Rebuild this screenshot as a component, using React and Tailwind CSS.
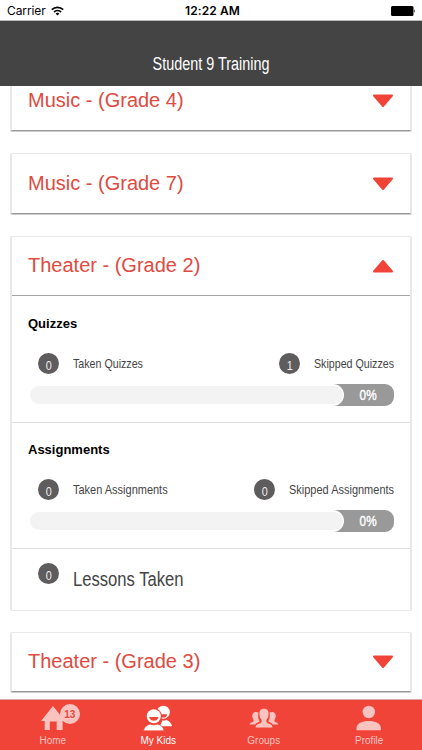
import React, { useState } from "react";

const courses = [
  { id: 1, title: "Music - (Grade 4)", style: "h-[60px] -mt-[15px]" },
  { id: 2, title: "Music - (Grade 7)", style: "h-[61px] mt-[22px]" },
  { id: 3, title: "Theater - (Grade 2)", style: "h-[60px]" },
  { id: 4, title: "Theater - (Grade 3)", style: "h-[60px] mt-[21px]" }
];

const Arrow = ({ up }) => (
  <svg viewBox="0 0 22 14" className={up ? "w-[22px] h-[14px] rotate-180" : "w-[22px] h-[14px]"}>
    <path d="M2 1.5H20L11 12Z" fill="#f04438" stroke="#f04438" strokeWidth="2" strokeLinejoin="round" />
  </svg>
);

const CourseHeader = ({ course, open, onToggle }) => (
  <button
    type="button"
    onClick={onToggle}
    className="w-full h-full flex items-center justify-between pl-4 pr-[16px] text-[#e04a3f]"
  >
    <span className="text-[20px] leading-6 pb-[2px] whitespace-nowrap">{course.title}</span>
    <Arrow up={open} />
  </button>
);

const Count = ({ value }) => (
  <span className="w-[21px] h-[21px] shrink-0 rounded-full bg-[#5e5c5d] text-[#eee] text-[13.5px] leading-[26px] text-center">
    <span className="inline-block scale-x-[.8]">{value}</span>
  </span>
);

const Section = ({ title, taken, skipped, percent, style, takenStyle, skippedStyle }) => (
  <div className={`${style} border-b border-[#dedede] pl-4 pr-[16px]`}>
    <h3 className="text-[13px] leading-4 font-bold text-black">{title}</h3>
    <div className="flex items-center justify-between mt-[21px] h-[21px] pl-[10px] text-[13px] leading-5 text-[#444]">
      <div className="flex items-center gap-[14px]">
        <Count value={taken} />
        <span className={`whitespace-nowrap origin-left ${takenStyle}`}>Taken {title}</span>
      </div>
      <div className="flex items-center gap-[14px]">
        <Count value={skipped} />
        <span className={`whitespace-nowrap origin-left ${skippedStyle}`}>Skipped {title}</span>
      </div>
    </div>
    <div className="mt-[10px] ml-[2px] h-[22px] flex items-center rounded-r-[9px] bg-linear-to-r from-white from-[304px] to-[#999] to-[304px]">
      <div className="w-[314px] h-[22px] bg-white rounded-r-[11px] flex items-center">
        <div className="w-[313px] h-[18px] rounded-[9px] bg-[#f3f3f3]" />
      </div>
      <span className="flex-1 pr-[2px] text-center text-[14px] leading-5 text-white [-webkit-text-stroke:0.4px_white]">
        <span className="inline-block scale-x-[.84]">{percent}%</span>
      </span>
    </div>
  </div>
);

const tabs = [
  {
    name: "Home",
    badge: 13,
    icon: (
      <svg viewBox="0 0 30 28" className="w-[30px] h-[28px]" fill="currentColor">
        <path d="M3 17 15 2 27 17H24.6V26H18.7V17.5H11.8V26H6.7V17Z" />
      </svg>
    )
  },
  {
    name: "My Kids",
    icon: (
      <svg viewBox="0 0 30 28" className="w-[30px] h-[28px]" fill="currentColor">
        <circle cx="20.3" cy="8.2" r="6.5" />
        <path d="M16.5 10.2H24.3C24 12.2 22.5 13.6 20.4 13.6H16.5Z" fill="#f04438" />
        <path d="M17 22.3 19.5 16.3C21 17 22.4 16.4 23.4 16 26.5 17 28.6 19.3 29 22.3Z" />
        <circle cx="10.8" cy="12.2" r="8.2" fill="#f04438" />
        <circle cx="10.8" cy="12.2" r="7" />
        <path d="M6.1 13H15.5C15 15.3 13.2 16.8 10.8 16.8S6.6 15.3 6.1 13Z" fill="#f04438" />
        <path
          d="M.6 26.8C1 23.2 4 20.8 7.3 20.2Q10.8 21.8 14.3 20.2C17.6 20.8 20.6 23.2 21 26.8Z"
          stroke="#f04438"
          strokeWidth=".6"
        />
      </svg>
    )
  },
  {
    name: "Groups",
    icon: (
      <svg viewBox="0 0 30 28" className="w-[30px] h-[28px]" fill="currentColor">
        <path d="M9.5 8.6C5.8 6.8 3 8.8 3.3 12.2 3.5 15 4.8 15.6 4.7 17.2 3.5 18.4 1.2 18 .7 20.4H6.3C7 18.9 9.5 18.4 10.7 17.6 9.3 15 8.8 12.6 9.5 8.6Z" />
        <path d="M20.5 8.6C24.2 6.8 27 8.8 26.7 12.2 26.5 15 25.2 15.6 25.3 17.2 26.5 18.4 28.8 18 29.3 20.4H23.7C23 18.9 20.5 18.4 19.3 17.6 20.7 15 21.2 12.6 20.5 8.6Z" />
        <path d="M15 4.7C11.6 4.7 10.2 6.9 10.5 10 10.4 13 11.3 14.2 12.4 15.5 13.2 19.2 11.5 19.2 9.3 20.1 7.5 20.7 6.7 21.8 6.5 23.6H23.5C23.3 21.8 22.5 20.7 20.7 20.1 18.5 19.2 16.8 19.2 17.6 15.5 18.7 14.2 19.6 13 19.5 10 19.8 6.9 18.4 4.7 15 4.7Z" />
      </svg>
    )
  },
  {
    name: "Profile",
    icon: (
      <svg viewBox="0 0 30 28" className="w-[30px] h-[28px]" fill="currentColor">
        <circle cx="14.8" cy="8" r="6.2" />
        <path d="M2.5 26.3V24C2.5 19.6 8.3 17 14.7 17S26.9 19.6 26.9 24V26.3Z" />
      </svg>
    )
  }
];

const App = () => {
  const [openId, setOpenId] = useState(3);
  const [activeTab, setActiveTab] = useState("My Kids");

  const toggle = (id) => setOpenId(openId === id ? null : id);

  return (
    <div className="w-[422px] h-[750px] flex flex-col overflow-hidden bg-white font-['Liberation_Sans',Arial,sans-serif]">
      {/* status bar */}
      <div className="h-[21px] shrink-0 grid grid-cols-3 items-center pl-[7px] pr-[6px] pt-px border-b border-[#bbb] text-black font-['Inter',sans-serif]">
        <div className="flex items-center gap-[5px]">
          <span className="text-[12px] leading-4 tracking-[-0.1px]">Carrier</span>
          <svg viewBox="0 0 13 10" className="w-[13px] h-[10px]" fill="none" stroke="black" strokeWidth="1.7">
            <path d="M.8 3.7C4 .6 9 .6 12.2 3.7M3 6C5 4.2 8 4.2 10 6" />
            <path d="M6.5 9.4 4.6 7.5Q6.5 6.2 8.4 7.5Z" fill="black" stroke="none" />
          </svg>
        </div>
        <span className="pl-[2px] text-center text-[12px] leading-4 font-semibold tracking-[0.1px] whitespace-nowrap">
          12:22 AM
        </span>
        <svg viewBox="0 0 25 10" className="w-[25px] h-[10px] justify-self-end">
          <rect width="22.5" height="10" rx="1.5" />
          <path d="M23.3 3.3Q25 5 23.3 6.7Z" />
        </svg>
      </div>

      <header className="relative z-10 h-[65px] shrink-0 bg-[#444] flex items-end justify-center pb-[10px]">
        <h1 className="text-[18px] leading-6 text-white whitespace-nowrap scale-x-[.8]">Student 9 Training</h1>
      </header>

      <main className="flex-1 min-h-0 px-[10px]">
        {courses.map(course =>
          course.id === 3 ? (
            <div key={course.id} className="mt-[22px] border border-x-2 border-[#e8e8e8] rounded-[2px]">
              <div className="h-[59px] border-b border-[#a5a5a5]">
                <CourseHeader course={course} open={openId === 3} onToggle={() => toggle(3)} />
              </div>
              {openId === 3 && (
                <>
                  <Section
                    title="Quizzes"
                    taken={0}
                    skipped={1}
                    percent={0}
                    style="h-[127px] pt-5"
                    takenStyle="w-[70px] scale-x-[.82]"
                    skippedStyle="w-[80px] scale-x-[.82]"
                  />
                  <Section
                    title="Assignments"
                    taken={0}
                    skipped={0}
                    percent={0}
                    style="h-[126px] pt-[19px]"
                    takenStyle="w-[95px] scale-x-[.845]"
                    skippedStyle="w-[105px] scale-x-[.845]"
                  />
                  <div className="h-[61px] flex items-start gap-[14px] pl-[26px] pt-[14px]">
                    <Count value={0} />
                    <span className="mt-[4px] text-[20px] leading-6 text-[#444] whitespace-nowrap origin-left scale-x-[.83]">
                      Lessons Taken
                    </span>
                  </div>
                </>
              )}
            </div>
          ) : (
            <div
              key={course.id}
              className={`${course.style} border border-x-2 border-[#e8e8e8] border-b-[#999] rounded-[2px] shadow-[0_1px_0_#ccc]`}
            >
              <CourseHeader course={course} open={openId === course.id} onToggle={() => toggle(course.id)} />
            </div>
          )
        )}
      </main>

      <nav className="relative h-[51px] shrink-0 flex bg-[#f04438] border-t border-[#d9a9a4]">
        {tabs.map(tab => (
          <button
            key={tab.name}
            type="button"
            onClick={() => setActiveTab(tab.name)}
            className={`flex-1 flex flex-col items-center pt-[4px] ${activeTab === tab.name ? "text-white" : "text-[#fac3c0]"}`}
          >
            <span className="relative">
              {tab.icon}
              {tab.badge && (
                <span className="absolute left-[22px] top-0 w-[20px] h-[20px] rounded-full bg-[#fac3c0] text-[#e8483e] text-[10px] leading-[21px] font-bold text-center">
                  {tab.badge}
                </span>
              )}
            </span>
            <span className="mt-[3px] text-[10px] leading-3 whitespace-nowrap">{tab.name}</span>
          </button>
        ))}
      </nav>
    </div>
  );
};

export default App;
